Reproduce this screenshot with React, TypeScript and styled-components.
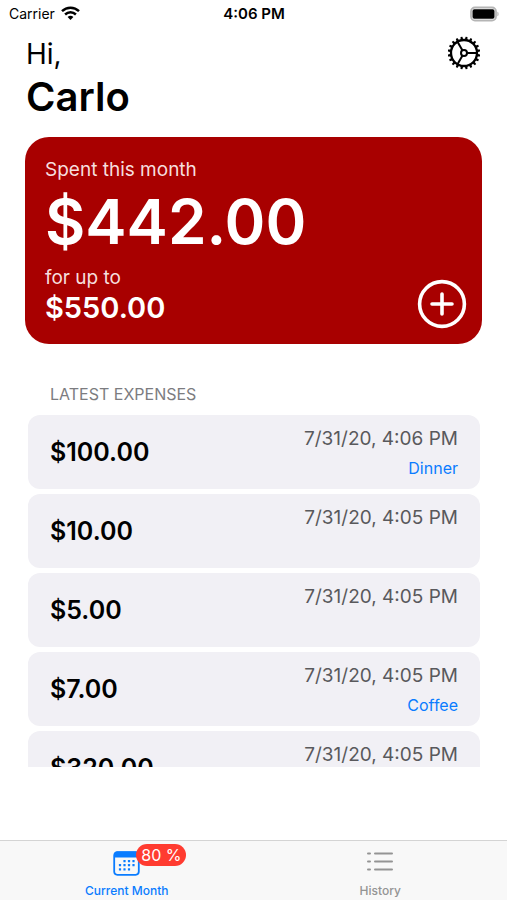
import React from "react";
import styled, { createGlobalStyle } from "styled-components";

const GlobalStyle = createGlobalStyle`
  * { box-sizing: border-box; }
  body { margin: 0; background: #fff; color: #000; }
  h1, h2, p, ul { margin: 0; padding: 0; }
  button { border: 0; padding: 0; background: none; color: inherit; font: inherit; cursor: pointer; }
`;

const Screen = styled.div`
  display: flex;
  flex-direction: column;
  height: 100vh;
  font-family: Inter, "Liberation Sans", sans-serif;
`;

const StatusBar = styled.div`
  display: grid;
  grid-template-columns: 1fr auto 1fr;
  align-items: center;
  height: 27px;
  padding: 0 8px 0 9px;
  font-size: 14px;
  line-height: 20px;
`;

const Carrier = styled.span`
  display: flex;
  align-items: center;
  gap: 6px;
`;

const Clock = styled.time`
  font-weight: 600;
  font-size: 15px;
`;

const BatteryIcon = styled.svg`
  justify-self: end;
`;

const Header = styled.header`
  display: flex;
  justify-content: space-between;
  align-items: flex-start;
  padding: 9px 27px 0 26px;
`;

const Greeting = styled.h1`
  font-weight: 400;
  font-size: 28px;
  line-height: 36px;
`;

const Name = styled.strong`
  display: block;
  font-weight: 600;
  font-size: 40px;
  line-height: 50px;
`;

const SettingsButton = styled.button`
  display: flex;
`;

const SummaryCard = styled.section`
  display: flex;
  justify-content: space-between;
  align-items: flex-end;
  margin: 15px 25px 0;
  padding: 20px 15px 15px 20px;
  border-radius: 24px;
  background: #a80000;
  color: #fff;
`;

const Caption = styled.p`
  font-size: 19px;
  line-height: 26px;
  color: #f6dede;
`;

const Spent = styled.p`
  padding-bottom: 4px;
  font-weight: 600;
  font-size: 62px;
  line-height: 78px;
`;

const Budget = styled.p`
  padding-bottom: 4px;
  font-weight: 600;
  font-size: 29px;
  line-height: 34px;
`;

const AddButton = styled.button`
  display: flex;
`;

const SectionTitle = styled.h2`
  margin: 40px 50px 11px;
  font-weight: 400;
  font-size: 16px;
  line-height: 20px;
  color: #7c7c80;
`;

const ExpenseList = styled.ul`
  flex: 1;
  min-height: 0;
  display: flex;
  flex-direction: column;
  gap: 5px;
  margin: 0 27px 73px 28px;
  list-style: none;
  overflow-y: auto;
  scrollbar-width: none;
`;

const ExpenseRow = styled.li`
  flex: none;
  display: flex;
  justify-content: space-between;
  height: 74px;
  padding: 8px 22px;
  border-radius: 12px;
  background: #f1f0f5;
`;

const Amount = styled.span`
  padding-top: 14px;
  font-weight: 600;
  font-size: 25px;
  line-height: 30px;
`;

const Details = styled.div`
  text-align: right;
`;

const ExpenseDate = styled.time`
  display: block;
  font-size: 19px;
  line-height: 32px;
  color: #59595c;
`;

const Category = styled.span`
  display: block;
  font-size: 16px;
  line-height: 26px;
  color: #0a7cff;
`;

const TabBar = styled.nav`
  display: grid;
  grid-template-columns: 1fr 1fr;
  height: 60px;
  border-top: 1px solid #d4d4d4;
  background: #f8f8f8;
`;

const Tab = styled.button<{ $active?: boolean }>`
  display: flex;
  flex-direction: column;
  align-items: center;
  padding-top: 9px;
  font-weight: 500;
  font-size: 12px;
  line-height: 16px;
  color: ${(p) => (p.$active ? "#0a7cff" : "#949494")};
`;

const TabIcon = styled.span`
  position: relative;
  display: flex;
  height: 33px;
`;

const Badge = styled.span`
  position: absolute;
  left: 23px;
  top: -6px;
  padding: 0 5px;
  border-radius: 11px;
  background: #ff3b30;
  color: #fff;
  font-weight: 400;
  font-size: 16px;
  line-height: 22px;
  white-space: nowrap;
`;

const WifiIcon = () => (
  <svg width="19" height="15" viewBox="0 0 19 15" fill="none" stroke="#000" strokeWidth="2.5" aria-hidden="true">
    <path d="M1 5.2C5.8.6 13.2.6 18 5.2" />
    <path d="M4.1 8.5c3.1-2.9 7.7-2.9 10.8 0" />
    <path d="M6.6 10.9c1.7-1.5 4.1-1.5 5.8 0L9.5 14z" fill="#000" stroke="none" />
  </svg>
);

const Battery = () => (
  <BatteryIcon width="29" height="16" viewBox="0 0 29 16" role="img" aria-label="Battery full">
    <rect x="1" y="1.5" width="25" height="13" rx="4" fill="#fff" stroke="#b5b5b5" strokeWidth="1.8" />
    <rect x="2.5" y="3.3" width="22" height="9.4" rx="1.8" fill="#000" />
    <path d="M27.4 5.7c1.6.4 1.6 4.2 0 4.6z" fill="#b5b5b5" />
  </BatteryIcon>
);

const teeth = Array.from({ length: 20 }, (_, i) => 9 + i * 18);

const GearIcon = () => (
  <svg width="32" height="34" viewBox="-16 -17 32 34" fill="none" stroke="#000" strokeWidth="2" aria-hidden="true">
    <circle r="13" strokeWidth="2.3" />
    <circle r="3" />
    {teeth.map((angle) => (
      <path key={angle} d="M13-1.4 16.3-.9V.9L13 1.4z" fill="#000" stroke="none" transform={`rotate(${angle})`} />
    ))}
    {[0, 120, 240].map((angle) => (
      <path key={angle} d="M3 0h10" transform={`rotate(${angle})`} />
    ))}
  </svg>
);

const AddIcon = () => (
  <svg width="50" height="50" viewBox="0 0 50 50" fill="none" stroke="#fff" strokeWidth="3.6" strokeLinecap="round" aria-hidden="true">
    <circle cx="25" cy="25" r="22.4" />
    <path d="M25 15v20M15 25h20" />
  </svg>
);

const calendarDots = [
  [11.5, 11], [16, 11], [20.5, 11],
  [7, 15], [11.5, 15], [16, 15], [20.5, 15],
  [7, 19.2], [11.5, 19.2], [16, 19.2],
];

const CalendarIcon = () => (
  <svg width="27" height="26" viewBox="0 0 27 26" aria-hidden="true">
    <rect x="1.2" y="2.2" width="24.6" height="22.6" rx="3.2" fill="none" stroke="currentColor" strokeWidth="1.8" />
    <path d="M1 7.6V5a3.4 3.4 0 0 1 3.4-3.4h18.2A3.4 3.4 0 0 1 26 5v2.6z" fill="currentColor" />
    {calendarDots.map(([x, y]) => (
      <rect key={`${x}-${y}`} x={x - 1.1} y={y - 0.9} width="2.2" height="2.2" rx="0.5" fill="currentColor" />
    ))}
  </svg>
);

const ListIcon = () => (
  <svg width="28" height="26" viewBox="0 0 28 26" fill="none" stroke="currentColor" strokeWidth="2" strokeLinecap="round" aria-hidden="true">
    {[3.5, 11.5, 19.5].map((y) => (
      <path key={y} d={`M2 ${y}h2M9 ${y}h17`} />
    ))}
  </svg>
);

const expenses = [
  { amount: "$100.00", date: "7/31/20, 4:06 PM", category: "Dinner" },
  { amount: "$10.00", date: "7/31/20, 4:05 PM" },
  { amount: "$5.00", date: "7/31/20, 4:05 PM" },
  { amount: "$7.00", date: "7/31/20, 4:05 PM", category: "Coffee" },
  { amount: "$320.00", date: "7/31/20, 4:05 PM" },
];

export default function App() {
  return (
    <>
      <GlobalStyle />
      <Screen>
        <StatusBar>
          <Carrier>
            Carrier
            <WifiIcon />
          </Carrier>
          <Clock>4:06 PM</Clock>
          <Battery />
        </StatusBar>
        <Header>
          <Greeting>
            Hi,
            <Name>Carlo</Name>
          </Greeting>
          <SettingsButton type="button" aria-label="Settings">
            <GearIcon />
          </SettingsButton>
        </Header>
        <SummaryCard>
          <div>
            <Caption>Spent this month</Caption>
            <Spent>$442.00</Spent>
            <Caption>for up to</Caption>
            <Budget>$550.00</Budget>
          </div>
          <AddButton type="button" aria-label="Add expense">
            <AddIcon />
          </AddButton>
        </SummaryCard>
        <SectionTitle>LATEST EXPENSES</SectionTitle>
        <ExpenseList>
          {expenses.map((expense) => (
            <ExpenseRow key={expense.amount}>
              <Amount>{expense.amount}</Amount>
              <Details>
                <ExpenseDate>{expense.date}</ExpenseDate>
                {expense.category && <Category>{expense.category}</Category>}
              </Details>
            </ExpenseRow>
          ))}
        </ExpenseList>
        <TabBar>
          <Tab type="button" $active aria-current="page">
            <TabIcon>
              <CalendarIcon />
              <Badge>80 %</Badge>
            </TabIcon>
            Current Month
          </Tab>
          <Tab type="button">
            <TabIcon>
              <ListIcon />
            </TabIcon>
            History
          </Tab>
        </TabBar>
      </Screen>
    </>
  );
}
